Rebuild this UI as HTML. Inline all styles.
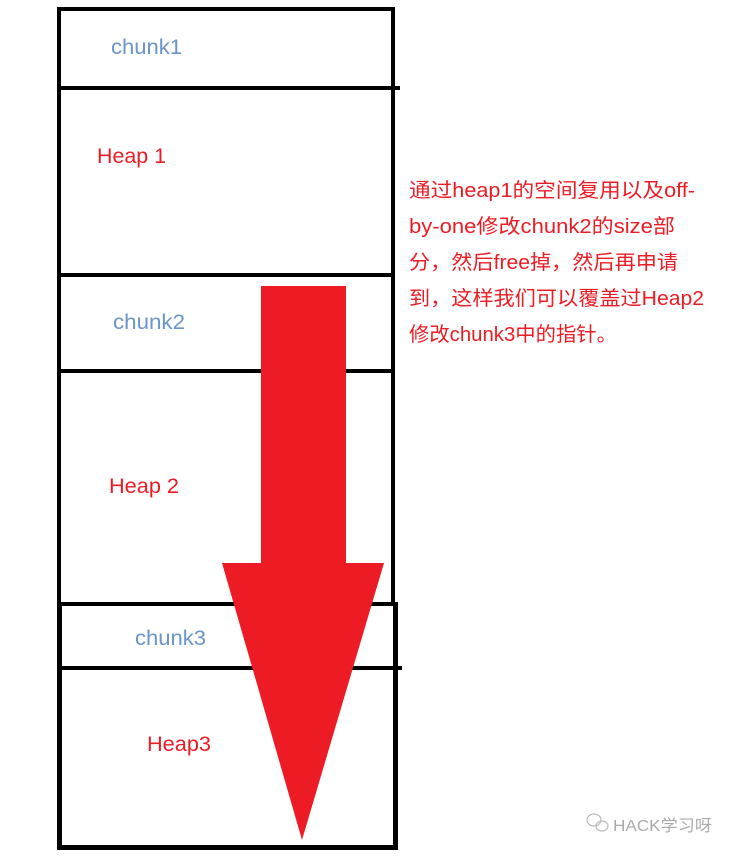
<!DOCTYPE html>
<html><head><meta charset="utf-8"><style>
html,body{margin:0;padding:0;background:#fff;width:736px;height:856px;overflow:hidden}
</style></head><body>
<svg width="736" height="856" xmlns="http://www.w3.org/2000/svg" style="position:absolute;left:0;top:0">
<g fill="#000">
<rect x="57" y="7" width="4" height="598"/>
<rect x="391" y="7" width="4" height="598"/>
<rect x="57" y="7" width="338" height="4"/>
<rect x="57" y="86" width="343" height="4"/>
<rect x="57" y="273" width="338" height="4"/>
<rect x="57" y="369" width="338" height="4"/>
<rect x="57" y="602" width="341" height="4"/>
<rect x="57" y="602" width="5" height="248"/>
<rect x="393" y="602" width="5" height="248"/>
<rect x="57" y="666" width="345" height="4"/>
<rect x="57" y="845" width="341" height="5"/>
</g>
<polygon fill="#ed1c24" points="261,286 346,286 346,563 384,563 302,840 222,563 261,563"/>
<g font-family="Liberation Sans, sans-serif" font-size="21" lengthAdjust="spacingAndGlyphs">
<text x="111" y="54" fill="#6b94c9" textLength="71" lengthAdjust="spacingAndGlyphs">chunk1</text>
<text x="113" y="329" fill="#6b94c9" textLength="72" lengthAdjust="spacingAndGlyphs">chunk2</text>
<text x="135" y="645" fill="#6b94c9" textLength="71" lengthAdjust="spacingAndGlyphs">chunk3</text>
<text x="97" y="163" fill="#ed1c24" textLength="69" lengthAdjust="spacingAndGlyphs">Heap 1</text>
<text x="109" y="493" fill="#ed1c24" textLength="70" lengthAdjust="spacingAndGlyphs">Heap 2</text>
<text x="147" y="751" fill="#ed1c24" textLength="64" lengthAdjust="spacingAndGlyphs">Heap3</text>
</g>
<g font-family="Liberation Sans, Noto Sans CJK SC, sans-serif" font-size="20" fill="#ed1c24">
<text x="409" y="197" textLength="286" lengthAdjust="spacingAndGlyphs">通过heap1的空间复用以及off-</text>
<text x="409" y="233" textLength="266" lengthAdjust="spacingAndGlyphs">by-one修改chunk2的size部</text>
<text x="409" y="269" textLength="269" lengthAdjust="spacingAndGlyphs">分，然后free掉，然后再申请</text>
<text x="409" y="305" textLength="295" lengthAdjust="spacingAndGlyphs">到，这样我们可以覆盖过Heap2</text>
<text x="409" y="341" textLength="208" lengthAdjust="spacingAndGlyphs">修改chunk3中的指针。</text>
</g>
<g stroke="#bbb" fill="none" stroke-width="1.2">
<ellipse cx="594" cy="820" rx="7" ry="6"/>
<ellipse cx="602" cy="826" rx="6" ry="5"/>
</g>
<text x="613" y="831" font-family="Liberation Sans, Noto Sans CJK SC, sans-serif" font-size="16" fill="#aaa" textLength="99" lengthAdjust="spacingAndGlyphs">HACK学习呀</text>
</svg>
</body></html>
